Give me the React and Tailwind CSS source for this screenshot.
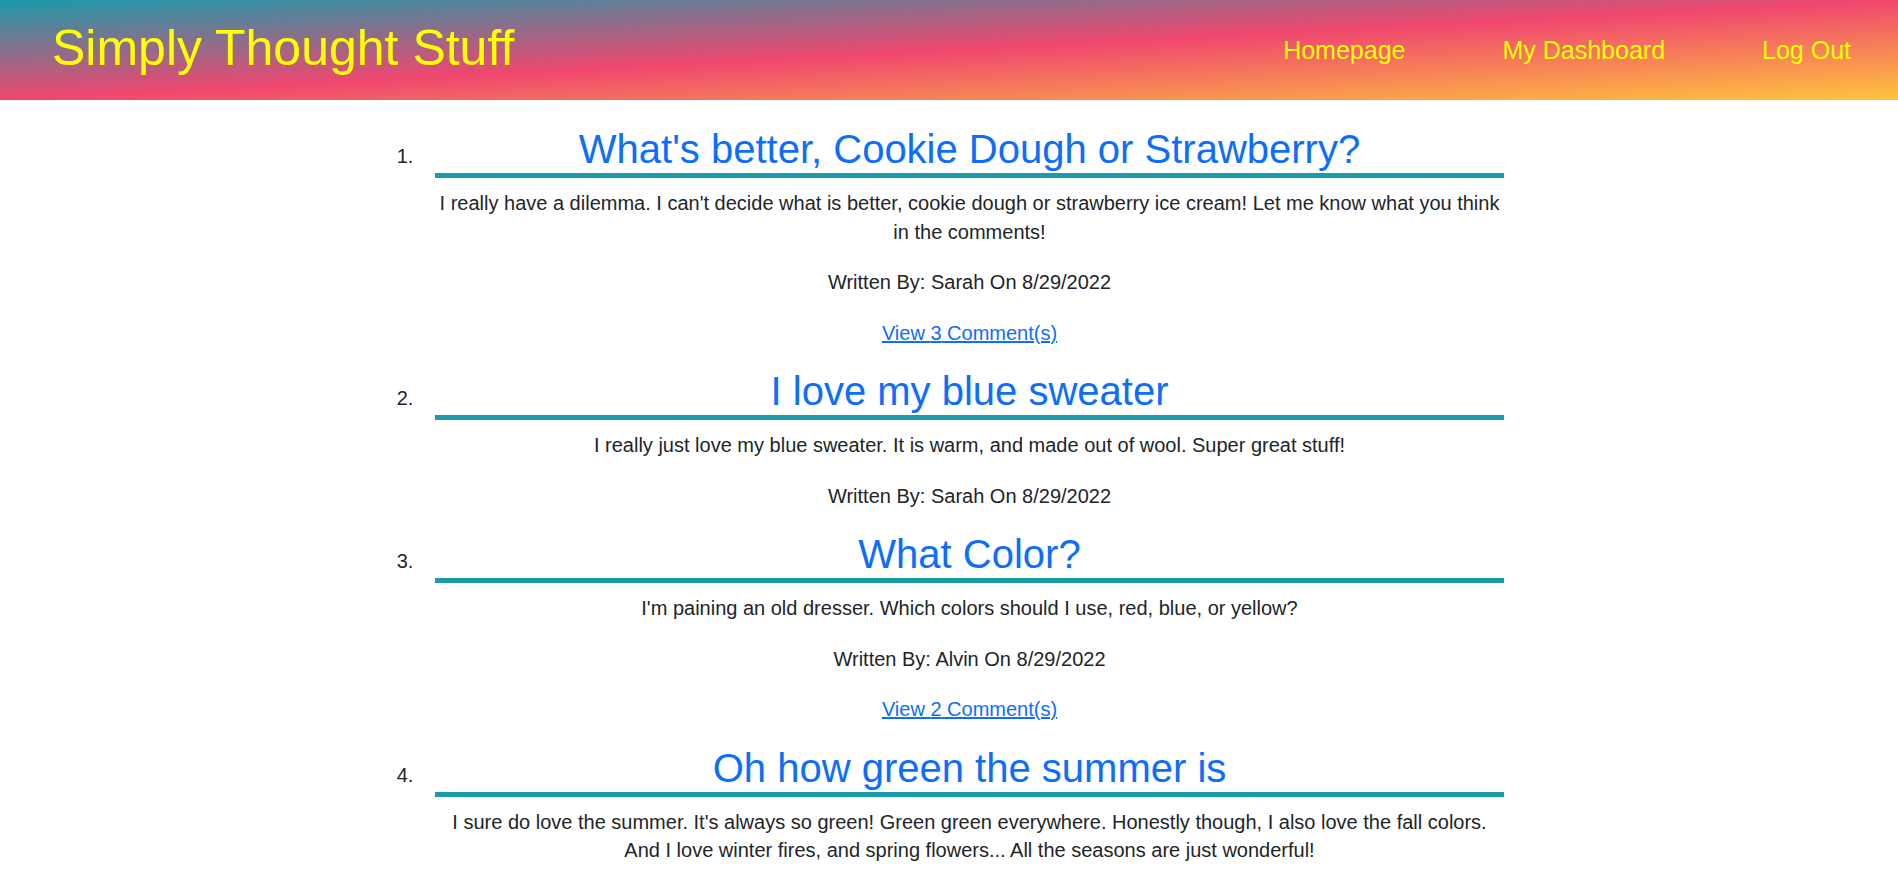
import React from 'react'

const posts = [
  {
    id: 1,
    title: "What's better, Cookie Dough or Strawberry?",
    body: "I really have a dilemma. I can't decide what is better, cookie dough or strawberry ice cream! Let me know what you think in the comments!",
    author: 'Sarah',
    date: '8/29/2022',
    comments: 3,
  },
  {
    id: 2,
    title: 'I love my blue sweater',
    body: 'I really just love my blue sweater. It is warm, and made out of wool. Super great stuff!',
    author: 'Sarah',
    date: '8/29/2022',
    comments: 0,
  },
  {
    id: 3,
    title: 'What Color?',
    body: "I'm paining an old dresser. Which colors should I use, red, blue, or yellow?",
    author: 'Alvin',
    date: '8/29/2022',
    comments: 2,
  },
  {
    id: 4,
    title: 'Oh how green the summer is',
    body: "I sure do love the summer. It's always so green! Green green everywhere. Honestly though, I also love the fall colors. And I love winter fires, and spring flowers... All the seasons are just wonderful!",
  },
]

// 상단 헤더
function Header() {
  return (
    <header className="flex h-[100px] items-center justify-between bg-[linear-gradient(to_bottom_right,#1b9aaa,#ef476f,#ffc43d)] pr-[47px] pl-[52px]">
      <h1 className="-mt-[4px] text-[50px] leading-[60px] text-[#ffff00]">Simply Thought Stuff</h1>
      <nav className="flex items-center gap-[97px] text-[25px] leading-[30px] text-[#ffff00]">
        <a href="#">Homepage</a>
        <a href="#">My Dashboard</a>
        <a href="#">Log Out</a>
      </nav>
    </header>
  )
}

// 게시글 하나
function PostItem({ post }) {
  return (
    <li className="pl-4">
      <h2 className="border-b-[5px] border-[#1b9aaa] text-center text-[40px] leading-[48px] text-[#0d6efd]">
        {post.title}
      </h2>
      <div className="flex flex-col gap-[22px] pt-[11px] pb-[20px] text-center leading-[28.5px]">
        <p>{post.body}</p>
        {post.author && (
          <p>
            Written By: {post.author} On {post.date}
          </p>
        )}
        {post.comments > 0 && (
          <p>
            <a href="#" className="text-[#0d6efd] underline">
              View {post.comments} Comment(s)
            </a>
          </p>
        )}
      </div>
    </li>
  )
}

export default function App() {
  return (
    <div className="h-screen overflow-hidden bg-white font-['Liberation_Sans',Arial,sans-serif] text-[#212529]">
      <Header />
      <ol className="mx-auto w-[1110px] list-decimal pt-[25px] pl-[25px] text-[20px]">
        {posts.map((post) => (
          <PostItem key={post.id} post={post} />
        ))}
      </ol>
    </div>
  )
}
